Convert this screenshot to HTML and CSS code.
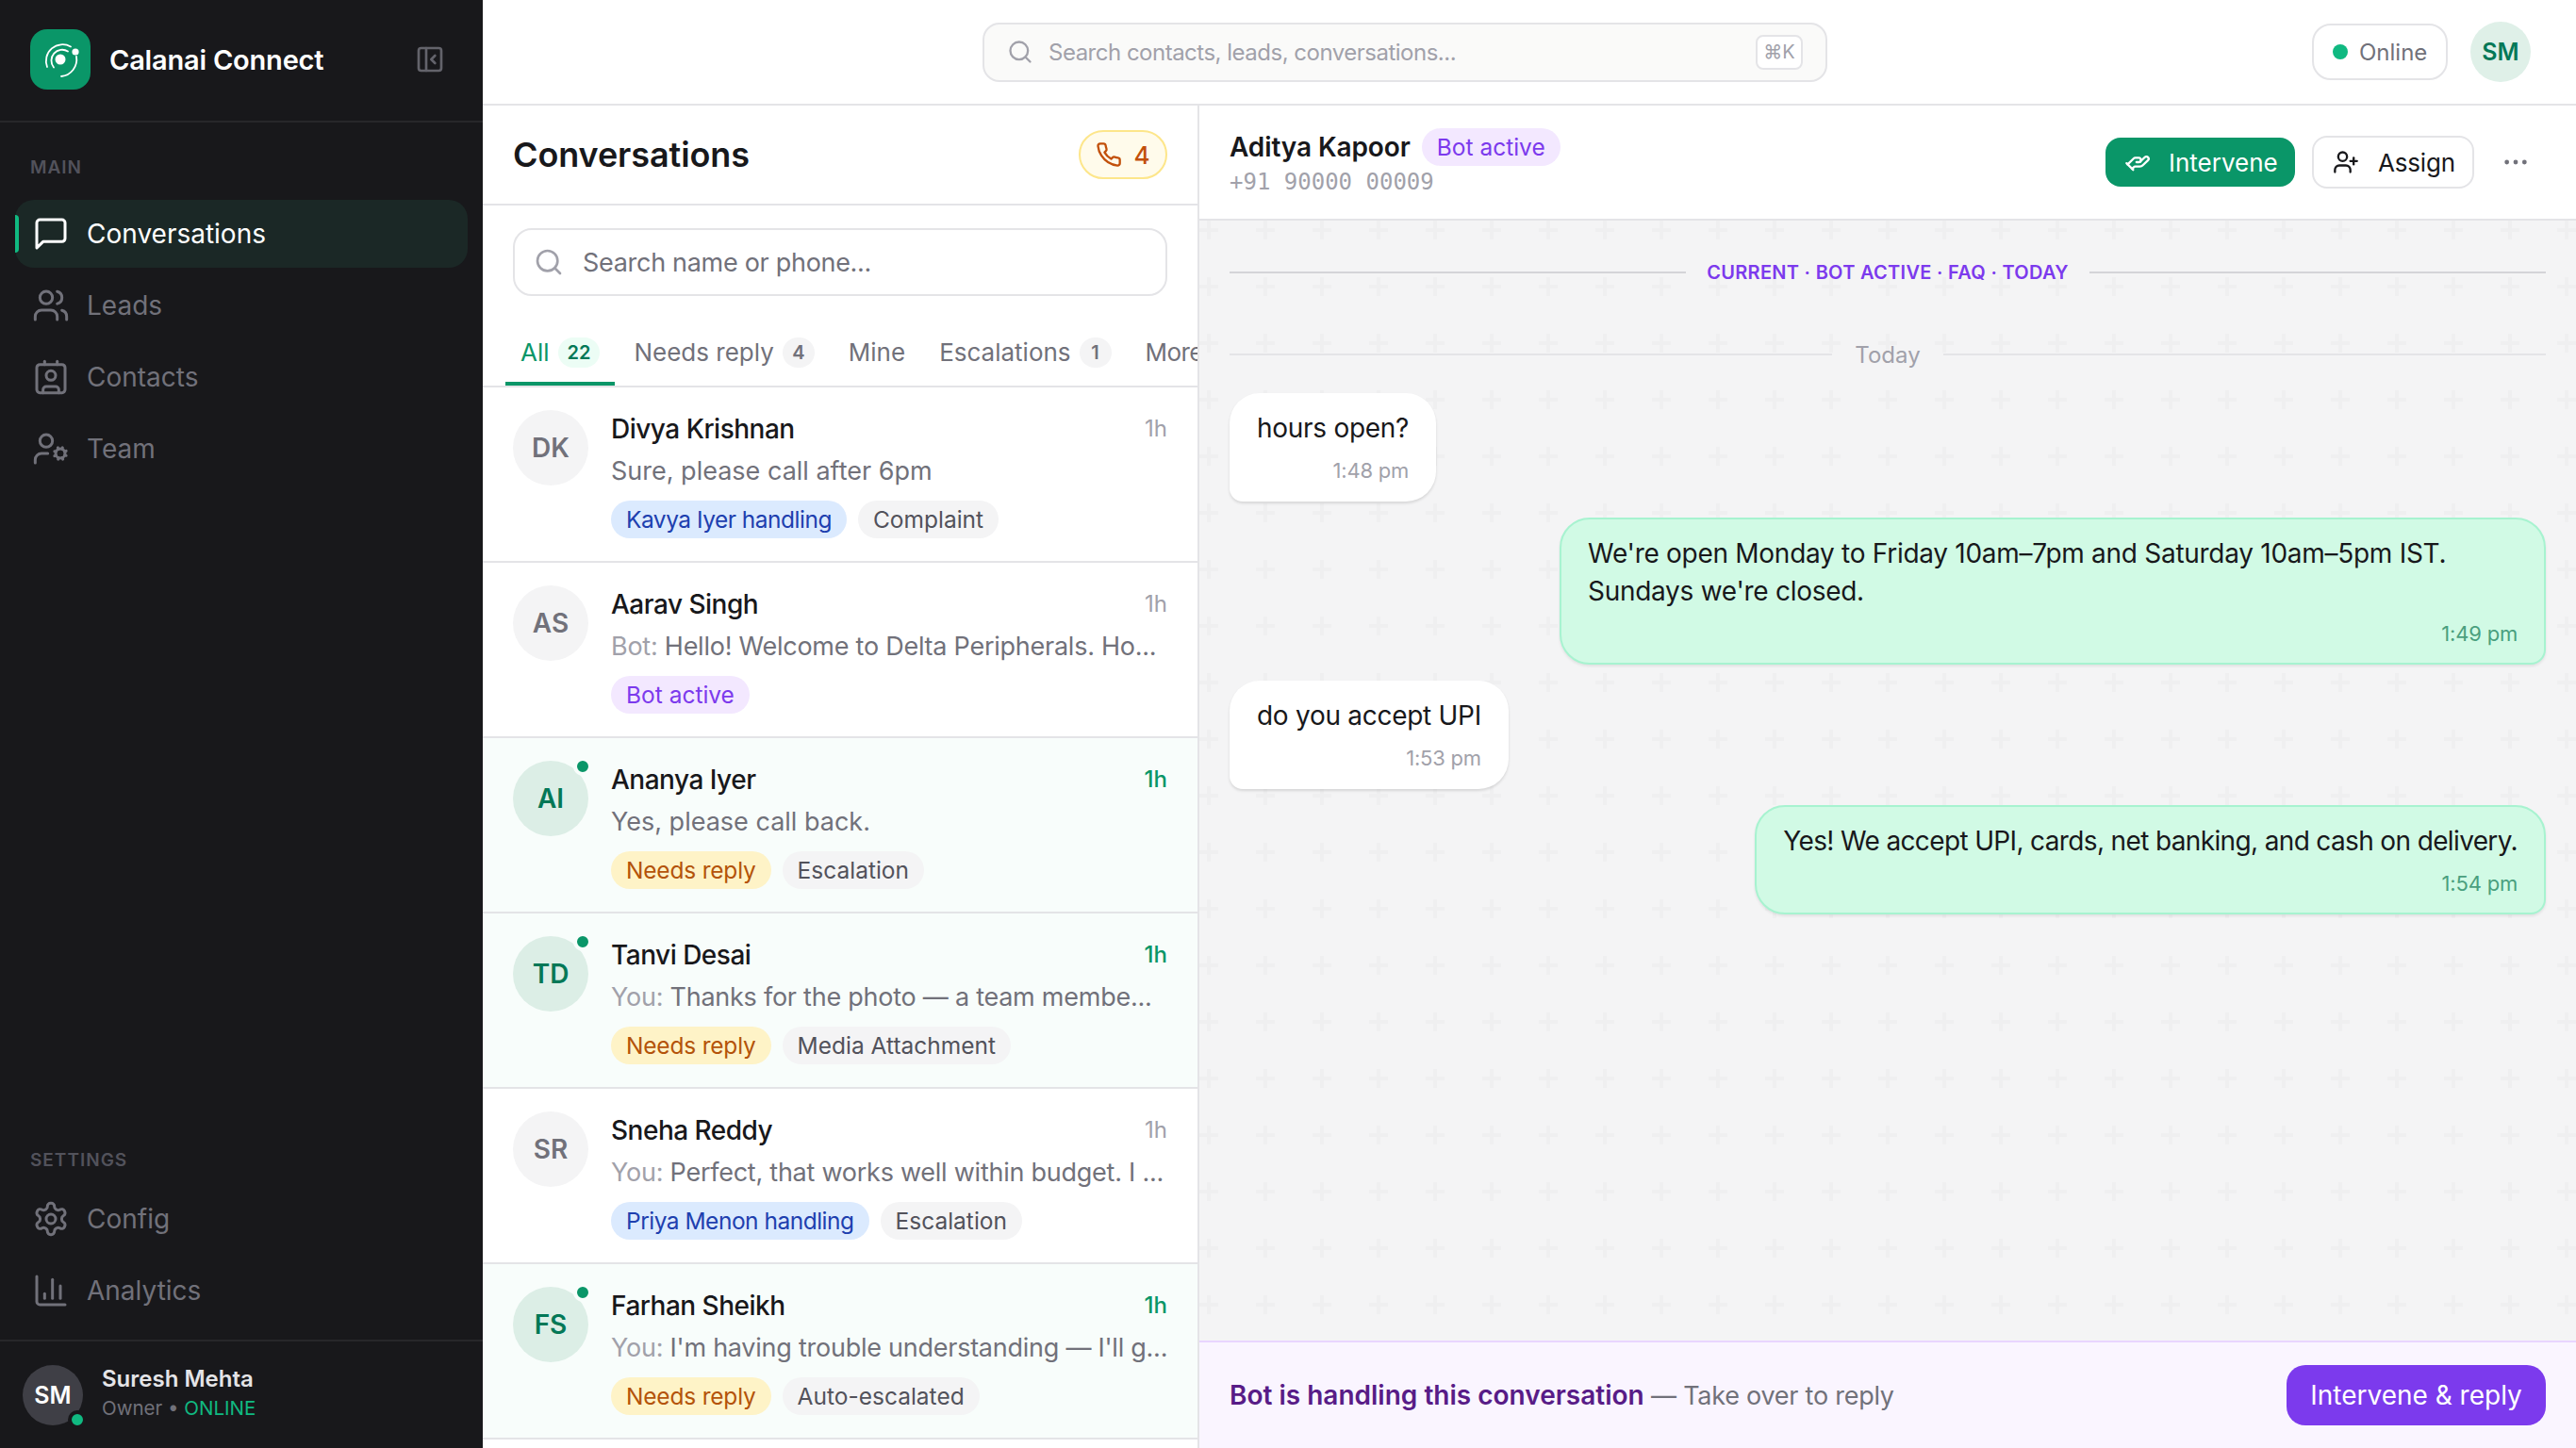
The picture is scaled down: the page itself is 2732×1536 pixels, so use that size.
FILE: index.html
```html
<!DOCTYPE html>
<html lang="en">
<head>
    <meta charset="UTF-8">
    <meta name="viewport" content="width=device-width, initial-scale=1.0">
    <title>Calanai Connect</title>
    <link rel="stylesheet" href="styles.css">
</head>
<body>
<div class="app">
    <aside class="sidebar">
        <div class="brand">
            <div class="brand-logo">
                <svg width="64" height="64" viewBox="0 0 64 64" fill="none" stroke="#fff" stroke-width="1.8" stroke-linecap="round">
                    <circle cx="32" cy="32" r="5.5" fill="#fff" stroke="none"/>
                    <path d="M25 40.5a11.5 11.5 0 0 1 15-17"/>
                    <path d="M18 40a17.5 17.5 0 0 1 25-21.5"/>
                    <path d="M49 29a18 18 0 0 1-16 21"/>
                    <circle cx="48" cy="24" r="3.6" fill="#fff" stroke="none"/>
                </svg>
            </div>
            <span class="brand-name">Calanai Connect</span>
            <svg class="collapse" width="32" height="32" viewBox="0 0 24 24" fill="none" stroke="currentColor" stroke-width="2" stroke-linecap="round" stroke-linejoin="round"><rect x="3" y="3" width="18" height="18" rx="2"/><path d="M9 3v18"/><path d="m16 15-3-3 3-3"/></svg>
        </div>

        <nav class="nav-main">
            <div class="nav-label">MAIN</div>
            <a class="nav-item active">
                <svg class="nav-icon" viewBox="0 0 24 24"><path d="M21 15a2 2 0 0 1-2 2H7l-4 4V5a2 2 0 0 1 2-2h14a2 2 0 0 1 2 2z"/></svg>
                Conversations
            </a>
            <a class="nav-item">
                <svg class="nav-icon" viewBox="0 0 24 24"><path d="M16 21v-2a4 4 0 0 0-4-4H6a4 4 0 0 0-4 4v2"/><circle cx="9" cy="7" r="4"/><path d="M22 21v-2a4 4 0 0 0-3-3.87"/><path d="M16 3.13a4 4 0 0 1 0 7.75"/></svg>
                Leads
            </a>
            <a class="nav-item">
                <svg class="nav-icon" viewBox="0 0 24 24"><path d="M16 2v2"/><path d="M7 22v-2a2 2 0 0 1 2-2h6a2 2 0 0 1 2 2v2"/><path d="M8 2v2"/><circle cx="12" cy="11" r="3"/><rect x="3" y="4" width="18" height="18" rx="2"/></svg>
                Contacts
            </a>
            <a class="nav-item">
                <svg class="nav-icon" viewBox="0 0 24 24"><circle cx="18" cy="15" r="3"/><circle cx="9" cy="7" r="4"/><path d="M10 15H6a4 4 0 0 0-4 4v2"/><path d="m21.7 16.4-.9-.3"/><path d="m15.2 13.9-.9-.3"/><path d="m16.6 18.7.3-.9"/><path d="m19.1 12.2.3-.9"/><path d="m19.6 18.7-.4-1"/><path d="m16.8 12.3-.4-1"/><path d="m14.3 16.6 1-.4"/><path d="m20.7 13.8 1-.4"/></svg>
                Team
            </a>
        </nav>

        <nav class="nav-settings">
            <div class="nav-label">SETTINGS</div>
            <a class="nav-item">
                <svg class="nav-icon" viewBox="0 0 24 24"><path d="M12.22 2h-.44a2 2 0 0 0-2 2v.18a2 2 0 0 1-1 1.73l-.43.25a2 2 0 0 1-2 0l-.15-.08a2 2 0 0 0-2.73.73l-.22.38a2 2 0 0 0 .73 2.73l.15.1a2 2 0 0 1 1 1.72v.51a2 2 0 0 1-1 1.74l-.15.09a2 2 0 0 0-.73 2.73l.22.38a2 2 0 0 0 2.73.73l.15-.08a2 2 0 0 1 2 0l.43.25a2 2 0 0 1 1 1.73V20a2 2 0 0 0 2 2h.44a2 2 0 0 0 2-2v-.18a2 2 0 0 1 1-1.73l.43-.25a2 2 0 0 1 2 0l.15.08a2 2 0 0 0 2.73-.73l.22-.39a2 2 0 0 0-.73-2.73l-.15-.08a2 2 0 0 1-1-1.74v-.5a2 2 0 0 1 1-1.74l.15-.09a2 2 0 0 0 .73-2.73l-.22-.38a2 2 0 0 0-2.73-.73l-.15.08a2 2 0 0 1-2 0l-.43-.25a2 2 0 0 1-1-1.73V4a2 2 0 0 0-2-2z"/><circle cx="12" cy="12" r="3"/></svg>
                Config
            </a>
            <a class="nav-item">
                <svg class="nav-icon" viewBox="0 0 24 24"><path d="M3 3v16a2 2 0 0 0 2 2h16"/><path d="M18 17V9"/><path d="M13 17V5"/><path d="M8 17v-3"/></svg>
                Analytics
            </a>
        </nav>

        <div class="user">
            <div class="user-avatar">SM<span class="user-dot"></span></div>
            <div>
                <div class="user-name">Suresh Mehta</div>
                <div class="user-role">Owner • <span class="user-online">ONLINE</span></div>
            </div>
        </div>
    </aside>

    <div class="main">
        <header class="topbar">
            <div class="topbar-search-wrap">
                <div class="topbar-search">
                    <svg class="search-icon" width="28" height="28" viewBox="0 0 24 24"><circle cx="11" cy="11" r="8"/><path d="m21 21-4.3-4.3"/></svg>
                    <span class="topbar-placeholder">Search contacts, leads, conversations...</span>
                    <span class="kbd">⌘K</span>
                </div>
            </div>
            <div class="online-pill"><span class="online-dot"></span>Online</div>
            <div class="top-avatar">SM</div>
        </header>

        <div class="content">
            <section class="list">
                <div class="list-head">
                    <h1>Conversations</h1>
                    <div class="call-badge">
                        <svg width="28" height="28" viewBox="0 0 24 24" fill="none" stroke="currentColor" stroke-width="2" stroke-linecap="round" stroke-linejoin="round"><path d="M22 16.92v3a2 2 0 0 1-2.18 2 19.79 19.79 0 0 1-8.63-3.07 19.5 19.5 0 0 1-6-6 19.79 19.79 0 0 1-3.07-8.67A2 2 0 0 1 4.11 2h3a2 2 0 0 1 2 1.72 12.84 12.84 0 0 0 .7 2.81 2 2 0 0 1-.45 2.11L8.09 9.91a16 16 0 0 0 6 6l1.27-1.27a2 2 0 0 1 2.11-.45 12.84 12.84 0 0 0 2.81.7A2 2 0 0 1 22 16.92z"/></svg>
                        4
                    </div>
                </div>
                <div class="list-search-wrap">
                    <div class="list-search">
                        <svg class="search-icon" width="32" height="32" viewBox="0 0 24 24"><circle cx="11" cy="11" r="8"/><path d="m21 21-4.3-4.3"/></svg>
                        <span>Search name or phone...</span>
                    </div>
                </div>
                <div class="tabs">
                    <div class="tab active">All <span class="count green">22</span></div>
                    <div class="tab">Needs reply <span class="count">4</span></div>
                    <div class="tab">Mine</div>
                    <div class="tab">Escalations <span class="count">1</span></div>
                    <div class="tab">More</div>
                </div>

                <div class="row">
                    <div class="avatar">DK</div>
                    <div class="row-body">
                        <div class="row-top"><span class="name">Divya Krishnan</span><span class="time">1h</span></div>
                        <div class="preview">Sure, please call after 6pm</div>
                        <div class="tags"><span class="tag blue">Kavya Iyer handling</span><span class="tag">Complaint</span></div>
                    </div>
                </div>
                <div class="row">
                    <div class="avatar">AS</div>
                    <div class="row-body">
                        <div class="row-top"><span class="name">Aarav Singh</span><span class="time">1h</span></div>
                        <div class="preview long"><span class="who">Bot:</span> Hello! Welcome to Delta Peripherals. Ho...</div>
                        <div class="tags"><span class="tag purple">Bot active</span></div>
                    </div>
                </div>
                <div class="row unread">
                    <div class="avatar">AI<span class="avatar-dot"></span></div>
                    <div class="row-body">
                        <div class="row-top"><span class="name">Ananya Iyer</span><span class="time">1h</span></div>
                        <div class="preview">Yes, please call back.</div>
                        <div class="tags"><span class="tag amber">Needs reply</span><span class="tag">Escalation</span></div>
                    </div>
                </div>
                <div class="row unread">
                    <div class="avatar">TD<span class="avatar-dot"></span></div>
                    <div class="row-body">
                        <div class="row-top"><span class="name">Tanvi Desai</span><span class="time">1h</span></div>
                        <div class="preview long"><span class="who">You:</span> Thanks for the photo — a team membe...</div>
                        <div class="tags"><span class="tag amber">Needs reply</span><span class="tag">Media Attachment</span></div>
                    </div>
                </div>
                <div class="row">
                    <div class="avatar">SR</div>
                    <div class="row-body">
                        <div class="row-top"><span class="name">Sneha Reddy</span><span class="time">1h</span></div>
                        <div class="preview long"><span class="who">You:</span> Perfect, that works well within budget. I ...</div>
                        <div class="tags"><span class="tag blue">Priya Menon handling</span><span class="tag">Escalation</span></div>
                    </div>
                </div>
                <div class="row unread">
                    <div class="avatar">FS<span class="avatar-dot"></span></div>
                    <div class="row-body">
                        <div class="row-top"><span class="name">Farhan Sheikh</span><span class="time">1h</span></div>
                        <div class="preview long"><span class="who">You:</span> I'm having trouble understanding — I'll g...</div>
                        <div class="tags"><span class="tag amber">Needs reply</span><span class="tag">Auto-escalated</span></div>
                    </div>
                </div>
            </section>

            <section class="chat">
                <div class="chat-head">
                    <div class="chat-info">
                        <div class="chat-title"><span class="chat-name">Aditya Kapoor</span><span class="tag purple">Bot active</span></div>
                        <div class="chat-phone">+91 90000 00009</div>
                    </div>
                    <div class="chat-actions">
                        <button class="btn-intervene">
                            <svg width="28" height="28" viewBox="0 0 24 24" fill="none" stroke="currentColor" stroke-width="2" stroke-linecap="round" stroke-linejoin="round"><path d="M11 12h2a2 2 0 1 0 0-4h-3c-.6 0-1.1.2-1.4.6L3 14"/><path d="m7 18 1.6-1.4c.3-.4.8-.6 1.4-.6h4c1.1 0 2.1-.4 2.8-1.2l4.6-4.4a2 2 0 0 0-2.75-2.91l-4.2 3.9"/><path d="m2 13 6 6"/></svg>
                            Intervene
                        </button>
                        <button class="btn-assign">
                            <svg width="28" height="28" viewBox="0 0 24 24" fill="none" stroke="currentColor" stroke-width="2" stroke-linecap="round" stroke-linejoin="round"><path d="M16 21v-2a4 4 0 0 0-4-4H6a4 4 0 0 0-4 4v2"/><circle cx="9" cy="7" r="4"/><path d="M19 8v6"/><path d="M22 11h-6"/></svg>
                            Assign
                        </button>
                        <svg class="more" width="32" height="32" viewBox="0 0 24 24" fill="#71717a"><circle cx="5" cy="12" r="1.8"/><circle cx="12" cy="12" r="1.8"/><circle cx="19" cy="12" r="1.8"/></svg>
                    </div>
                </div>

                <div class="messages">
                    <div class="divider session"><span>CURRENT · BOT ACTIVE · FAQ · TODAY</span></div>
                    <div class="divider day"><span>Today</span></div>

                    <div class="msg in">
                        <div class="msg-text">hours open?</div>
                        <div class="msg-time">1:48 pm</div>
                    </div>
                    <div class="msg out">
                        <div class="msg-text">We're open Monday to Friday 10am–7pm and Saturday 10am–5pm IST. Sundays we're closed.</div>
                        <div class="msg-time">1:49 pm</div>
                    </div>
                    <div class="msg in">
                        <div class="msg-text">do you accept UPI</div>
                        <div class="msg-time">1:53 pm</div>
                    </div>
                    <div class="msg out tight">
                        <div class="msg-text">Yes! We accept UPI, cards, net banking, and cash on delivery.</div>
                        <div class="msg-time">1:54 pm</div>
                    </div>
                </div>

                <div class="takeover">
                    <div class="takeover-text"><strong>Bot is handling this conversation</strong> — Take over to reply</div>
                    <button class="btn-reply">Intervene &amp; reply</button>
                </div>
            </section>
        </div>
    </div>
</div>
</body>
</html>
```

FILE: styles.css
```css
* {
    box-sizing: border-box;
}
body {
    margin: 0;
    font-family: Inter, "Noto Sans", sans-serif;
    color: #18181b;
    background: #fff;
}
button {
    font-family: inherit;
    cursor: pointer;
}
.app {
    display: flex;
    width: 2732px;
    height: 1536px;
    overflow: hidden;
}

/* sidebar */
.sidebar {
    width: 512px;
    flex: none;
    display: flex;
    flex-direction: column;
    background: #18181b;
}
.brand {
    height: 130px;
    flex: none;
    display: flex;
    align-items: center;
    padding: 0 40px 2px 32px;
    border-bottom: 2px solid #27272a;
}
.brand-logo {
    width: 64px;
    height: 64px;
    border-radius: 18px;
    background: #0a9668;
}
.brand-logo svg {
    display: block;
}
.brand-name {
    margin-left: 20px;
    flex: 1;
    font-size: 29px;
    font-weight: 600;
    color: #fff;
    letter-spacing: -0.2px;
}
.collapse {
    color: #63636b;
}
.nav-main {
    flex: 1;
    padding: 33px 16px 0;
}
.nav-settings {
    padding: 0 16px 16px;
}
.nav-label {
    height: 30px;
    line-height: 30px;
    padding-left: 16px;
    margin-bottom: 19px;
    font-size: 19px;
    font-weight: 600;
    letter-spacing: 1px;
    color: #52525b;
}
.nav-settings .nav-label {
    margin-bottom: 11px;
}
.nav-item {
    position: relative;
    display: flex;
    align-items: center;
    gap: 18px;
    height: 72px;
    margin-bottom: 4px;
    padding-left: 18px;
    border-radius: 20px;
    font-size: 28px;
    color: #71717a;
}
.nav-settings .nav-item:last-child {
    margin-bottom: 0;
}
.nav-item.active {
    background: #1b2826;
    color: #fff;
}
.nav-item.active::before {
    content: "";
    position: absolute;
    left: 0;
    top: 16px;
    bottom: 16px;
    width: 4px;
    border-radius: 0 4px 4px 0;
    background: #10b981;
}
.nav-icon {
    width: 40px;
    height: 40px;
    fill: none;
    stroke: currentColor;
    stroke-width: 1.8;
    stroke-linecap: round;
    stroke-linejoin: round;
}
.user {
    height: 115px;
    flex: none;
    display: flex;
    align-items: center;
    gap: 20px;
    padding: 0 24px;
    border-top: 2px solid #27272a;
}
.user-avatar {
    position: relative;
    width: 64px;
    height: 64px;
    flex: none;
    display: flex;
    align-items: center;
    justify-content: center;
    border-radius: 50%;
    background: #3f3f46;
    color: #fff;
    font-size: 25px;
    font-weight: 600;
}
.user-dot {
    position: absolute;
    right: -4px;
    bottom: -4px;
    width: 20px;
    height: 20px;
    border-radius: 50%;
    background: #10b981;
    border: 4px solid #18181b;
}
.user-name {
    font-size: 24px;
    font-weight: 600;
    color: #e4e4e7;
    line-height: 30px;
    margin-top: -2px;
}
.user-role {
    font-size: 20.5px;
    line-height: 32px;
    color: #71717a;
}
.user-online {
    color: #10b981;
}

/* top bar */
.main {
    flex: 1;
    min-width: 0;
    display: flex;
    flex-direction: column;
}
.topbar {
    height: 112px;
    flex: none;
    display: flex;
    align-items: center;
    padding: 0 48px 0 40px;
    border-bottom: 2px solid #e4e4e7;
}
.topbar-search-wrap {
    flex: 1;
    display: flex;
    justify-content: center;
    margin-right: 24px;
}
.topbar-search {
    width: 896px;
    height: 63px;
    display: flex;
    align-items: center;
    gap: 16px;
    padding: 0 24px;
    border: 2px solid #e4e4e7;
    border-radius: 18px;
    background: #fafaf9;
}
.search-icon {
    flex: none;
    fill: none;
    stroke: #a1a1aa;
    stroke-width: 2;
    stroke-linecap: round;
    stroke-linejoin: round;
}
.topbar-placeholder {
    flex: 1;
    font-size: 24px;
    letter-spacing: -0.5px;
    color: #a1a1aa;
}
.kbd {
    width: 50px;
    height: 37px;
    display: flex;
    align-items: center;
    justify-content: center;
    border: 2px solid #e4e4e7;
    border-radius: 8px;
    background: #fff;
    font-size: 20px;
    color: #a1a1aa;
}
.online-pill {
    width: 144px;
    height: 60px;
    display: flex;
    align-items: center;
    gap: 12px;
    padding-left: 20px;
    border: 2px solid #e4e4e7;
    border-radius: 20px;
    font-size: 24px;
    color: #71717a;
}
.online-dot {
    width: 16px;
    height: 16px;
    border-radius: 50%;
    background: #10b981;
}
.top-avatar {
    width: 64px;
    height: 64px;
    margin-left: 24px;
    display: flex;
    align-items: center;
    justify-content: center;
    border-radius: 50%;
    background: #dff0e8;
    color: #047857;
    font-size: 25px;
    font-weight: 600;
}
.content {
    flex: 1;
    min-height: 0;
    display: flex;
}

/* conversation list */
.list {
    width: 760px;
    flex: none;
    overflow: hidden;
    border-right: 2px solid #e4e4e7;
}
.list-head {
    height: 106px;
    display: flex;
    align-items: center;
    justify-content: space-between;
    padding: 0 32px;
    border-bottom: 2px solid #e4e4e7;
}
.list-head h1 {
    margin: 0;
    font-size: 36px;
    font-weight: 600;
    letter-spacing: -0.1px;
}
.call-badge {
    width: 94px;
    height: 52px;
    display: flex;
    align-items: center;
    justify-content: center;
    gap: 12px;
    border: 2px solid #fde68a;
    border-radius: 26px;
    background: #fffbeb;
    color: #c2500a;
    font-size: 26px;
    font-weight: 500;
}
.list-search-wrap {
    padding: 24px 32px 0;
}
.list-search {
    height: 72px;
    display: flex;
    align-items: center;
    gap: 20px;
    padding: 0 20px;
    border: 2px solid #e4e4e7;
    border-radius: 20px;
    font-size: 27px;
    letter-spacing: -0.3px;
    color: #71717a;
}
.tabs {
    height: 97px;
    display: flex;
    align-items: flex-end;
    gap: 4px;
    padding-left: 24px;
    border-bottom: 2px solid #e4e4e7;
    white-space: nowrap;
}
.tab {
    height: 63px;
    display: flex;
    align-items: center;
    gap: 9px;
    padding: 0 16px 8px;
    font-size: 26px;
    color: #71717a;
}
.tab:last-child {
    letter-spacing: -0.6px;
}
.tab.active {
    color: #0a9668;
    box-shadow: inset 0 -4px 0 #0a9668;
}
.count {
    min-width: 34px;
    height: 32px;
    display: flex;
    align-items: center;
    justify-content: center;
    padding: 0 10px;
    border-radius: 16px;
    background: #f4f4f5;
    color: #71717a;
    font-size: 20px;
    font-weight: 600;
}
.count.green {
    background: #ecfdf5;
    color: #047857;
}
.row {
    height: 186px;
    display: flex;
    gap: 24px;
    padding: 24px 32px 0;
    border-bottom: 2px solid #e4e4e7;
}
.row.unread {
    background: #f8fdfb;
}
.avatar {
    position: relative;
    width: 80px;
    height: 80px;
    flex: none;
    display: flex;
    align-items: center;
    justify-content: center;
    border-radius: 50%;
    background: #f4f4f5;
    color: #71717a;
    font-size: 28px;
    font-weight: 600;
}
.unread .avatar {
    background: #dceee6;
    color: #047857;
}
.avatar-dot {
    position: absolute;
    top: -4px;
    right: -4px;
    width: 20px;
    height: 20px;
    border-radius: 50%;
    background: #0a9668;
    border: 4px solid #f8fdfb;
}
.row-body {
    flex: 1;
    min-width: 0;
}
.row-top {
    display: flex;
    align-items: center;
    justify-content: space-between;
    height: 39px;
}
.name {
    font-size: 28px;
    font-weight: 500;
    letter-spacing: -0.5px;
}
.time {
    font-size: 24px;
    color: #a1a1aa;
}
.unread .time {
    color: #0a9668;
    font-weight: 500;
}
.preview {
    height: 50px;
    line-height: 51px;
    font-size: 27px;
    color: #71717a;
    white-space: nowrap;
}
.preview.long {
    letter-spacing: -0.25px;
}
.who {
    color: #a1a1aa;
}
.tags {
    display: flex;
    gap: 12px;
    margin-top: 7px;
}
.tag {
    height: 40px;
    display: inline-flex;
    align-items: center;
    padding: 0 16px;
    border-radius: 20px;
    background: #f4f4f5;
    color: #52525b;
    font-size: 24.5px;
    white-space: nowrap;
}
.tag.blue {
    background: #dbeafe;
    color: #1e40af;
    letter-spacing: -0.5px;
}
.tag.purple {
    background: #f3e8ff;
    color: #7c3aed;
}
.tag.amber {
    background: #fef3c7;
    color: #b45309;
    letter-spacing: -0.2px;
}

/* chat */
.chat {
    flex: 1;
    min-width: 0;
    display: flex;
    flex-direction: column;
}
.chat-head {
    height: 122px;
    flex: none;
    display: flex;
    align-items: center;
    justify-content: space-between;
    padding: 0 48px 0 32px;
    border-bottom: 2px solid #e4e4e7;
}
.chat-title {
    display: flex;
    align-items: center;
    gap: 12px;
}
.chat-name {
    font-size: 28px;
    font-weight: 600;
    letter-spacing: -0.1px;
}
.chat-phone {
    margin-top: 2px;
    font-family: "DejaVu Sans Mono", monospace;
    font-size: 24px;
    line-height: 30px;
    color: #a1a1aa;
}
.chat-actions {
    display: flex;
    align-items: center;
}
.btn-intervene {
    width: 201px;
    height: 52px;
    display: flex;
    align-items: center;
    gap: 19px;
    padding: 0 0 0 20px;
    border: none;
    border-radius: 16px;
    background: #0a9668;
    color: #fff;
    font-size: 26px;
}
.btn-assign {
    width: 172px;
    height: 56px;
    margin-left: 18px;
    display: flex;
    align-items: center;
    gap: 20px;
    padding: 0 0 0 20px;
    border: 2px solid #e4e4e7;
    border-radius: 16px;
    background: #fff;
    color: #18181b;
    font-size: 26px;
    letter-spacing: -0.2px;
}
.more {
    margin-left: 28px;
}
.messages {
    flex: 1;
    min-height: 0;
    display: flex;
    flex-direction: column;
    padding: 0 32px;
    background-color: #f4f4f5;
    background-image: url("data:image/svg+xml,%3Csvg xmlns='http://www.w3.org/2000/svg' width='60' height='60'%3E%3Cpath d='M8 0h4v8h8v4h-8v8H8v-8H0V8h8z' fill='%23efeff0'/%3E%3C/svg%3E");
}
.divider {
    display: flex;
    align-items: center;
    gap: 22px;
}
.divider::before,
.divider::after {
    content: "";
    flex: 1;
    height: 2px;
    background: #d4d4d8;
}
.divider.session {
    height: 30px;
    margin-top: 40px;
    font-size: 20px;
    font-weight: 600;
    letter-spacing: 0.3px;
    color: #7c3aed;
}
.divider.day {
    height: 40px;
    margin-top: 52px;
    margin-bottom: 21px;
    font-size: 24px;
    color: #a1a1aa;
    gap: 24px;
}
.divider.day::before,
.divider.day::after {
    background: #e4e4e7;
}
.msg {
    max-width: 1046px;
    margin-bottom: 17px;
    border-radius: 32px;
    font-size: 28px;
    line-height: 40px;
    letter-spacing: -0.28px;
}
.msg.in {
    align-self: flex-start;
    padding: 17px 29px 18px;
    background: #fff;
    border-bottom-left-radius: 14px;
    box-shadow: 0 2px 3px rgba(0, 0, 0, 0.12);
}
.msg.out {
    align-self: flex-end;
    padding: 16px 28px;
    background: #d1fae5;
    border: 2px solid #a7f3d0;
    border-bottom-right-radius: 16px;
    box-shadow: 0 2px 3px rgba(0, 0, 0, 0.08);
}
.msg.tight .msg-text {
    letter-spacing: -0.64px;
}
.msg-time {
    margin-top: 10px;
    text-align: right;
    font-size: 22px;
    letter-spacing: -0.2px;
    line-height: 30px;
    color: #a1a1aa;
}
.msg.out .msg-time {
    color: #4a9f7e;
}
.takeover {
    height: 114px;
    flex: none;
    display: flex;
    align-items: center;
    justify-content: space-between;
    padding: 0 32px;
    border-top: 2px solid #e9d5ff;
    background: #faf5ff;
}
.takeover-text {
    font-size: 27px;
    letter-spacing: -0.25px;
    color: #71717a;
}
.takeover-text strong {
    font-size: 28px;
    letter-spacing: 0;
    font-weight: 600;
    color: #581c87;
}
.btn-reply {
    width: 275px;
    height: 64px;
    border: none;
    border-radius: 20px;
    background: #7c3aed;
    color: #fff;
    font-size: 28px;
}
```
